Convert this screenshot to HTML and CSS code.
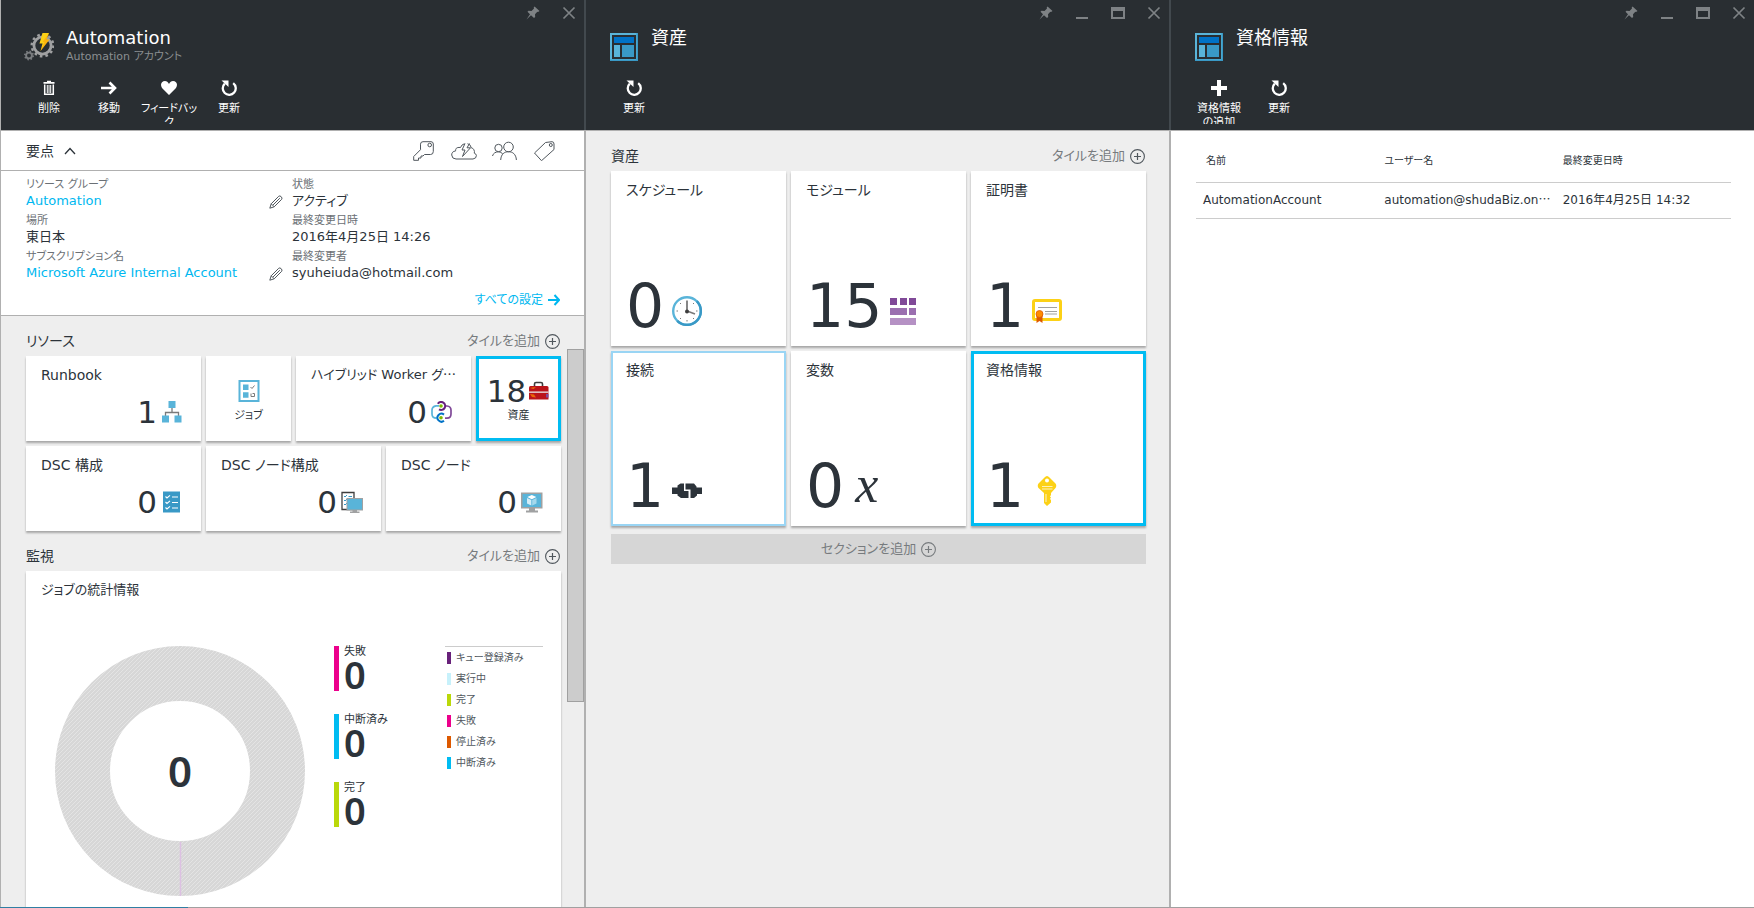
FILE: index.html
```html
<!DOCTYPE html>
<html lang="ja">
<head>
<meta charset="utf-8">
<meta name="viewport" content="width=device-width, initial-scale=1">
<title>Automation</title>
<link rel="stylesheet" href="styles.css">
</head>
<body>
<svg class="defs" aria-hidden="true">
  <symbol id="pin" viewBox="0 0 14 14"><path d="M8.600 0.500L13.500 5L12 6L11.300 5.700L9 8.200L9.200 11L8 12L5 9.200L0.500 13.500L4 8.200L1.500 5.800L2.500 4.800L5.500 5L8 2.600L7.700 1.500Z"/></symbol>
  <symbol id="min" viewBox="0 0 14 14"><path d="M1 11h12v2H1z"/></symbol>
  <symbol id="max" viewBox="0 0 14 14"><path fill-rule="evenodd" d="M0 1h14v12H0zM2 5v6h10V5z"/></symbol>
  <symbol id="close" viewBox="0 0 14 14"><path d="M1.500 1.500l11 11M12.500 1.500l-11 11" fill="none" stroke="currentColor" stroke-width="1.700"/></symbol>
  <symbol id="refresh" viewBox="0 0 16 16"><path d="M12.200 3.200A6.500 6.500 0 1 1 3.800 3.600" fill="none" stroke="currentColor" stroke-width="2.300"/><path d="M0.500 0.500H7.500V7Z"/></symbol>
  <symbol id="plus" viewBox="0 0 15 15"><circle cx="7.500" cy="7.500" r="6.900" fill="none" stroke="currentColor" stroke-width="1.100"/><path d="M7.500 4v7M4 7.500h7" stroke="currentColor" stroke-width="1.200"/></symbol>
  <symbol id="dash" viewBox="0 0 28 28"><path fill="#59b4d9" d="M0 0h28v28H0z"/><path fill="#3999c6" d="M0 26.500h28V28H0zM26.500 0H28v28h-1.500z"/><path fill="#292e32" d="M2 2h24v24H2z"/><path fill="#0072c6" d="M4 4h20v6H4z"/><path fill="#59b4d9" d="M4 12h6v12H4z"/><path fill="#3999c6" d="M12 12h12v12H12z"/></symbol>
  <symbol id="pencil" viewBox="0 0 14 14"><path d="M0.800 13.200L2.200 8.800L9.700 1.300Q10.800 0.300 12.200 1.700T12.700 4.300L5.200 11.800ZM2.200 8.800L5.200 11.800M4 10L10.800 3.200" fill="none" stroke="currentColor"/></symbol>
</svg>

<main class="blades">
  <section class="blade">
    <header class="blade-head">
      <div class="controls">
        <button aria-label="ピン留め"><svg><use href="#pin"/></svg></button>
        <button aria-label="閉じる"><svg><use href="#close"/></svg></button>
      </div>
      <div class="title">
        <svg class="title-icon" viewBox="0 0 30 30">
          <g fill="none" stroke="#a0a1a2"><circle cx="18.500" cy="13.500" r="8.600" stroke-width="2.800"/><circle cx="18.500" cy="13.500" r="10.800" stroke-width="2.400" stroke-dasharray="2.600 3.055"/></g>
          <g fill="none" stroke="#7a7d80"><circle cx="5" cy="23.500" r="2.900" stroke-width="1.900"/><circle cx="5" cy="23.500" r="4.200" stroke-width="1.600" stroke-dasharray="1.500 1.799"/></g>
          <path fill="#fcd116" d="M18.500 1H25L22.500 7.500H25.500L16.500 19L18.500 11.500H15.500Z"/><path fill="#ff8c00" opacity=".4" d="M25 1L22.500 7.500H25.500L16.500 19L20.500 10H18.500Z"/>
        </svg>
        <div><h1>Automation</h1><p>Automation アカウント</p></div>
      </div>
      <div class="commands">
        <button><svg viewBox="0 0 16 16"><path fill="none" stroke="currentColor" stroke-width="1.500" d="M3.700 4.500V14.300H12.300V4.500"/><path fill="none" stroke="currentColor" d="M6.300 5V13M8 5V13M9.700 5V13"/><path d="M2.500 2h11v1.700h-11zM6 .8h4V2H6z"/></svg><span>削除</span></button>
        <button><svg viewBox="0 0 16 16"><path fill="none" stroke="currentColor" stroke-width="2.600" d="M0 8H14M8.500 2.500L14 8L8.500 13.500"/></svg><span>移動</span></button>
        <button><svg viewBox="0 0 16 16"><path d="M8 15L1 8Q-1 4.500 1 2.300C3 .3 6.500.5 8 4C9.500.5 13 .3 15 2.300Q17 4.500 15 8Z"/></svg><span>フィードバッ<br>ク</span></button>
        <button><svg><use href="#refresh"/></svg><span>更新</span></button>
      </div>
    </header>
    <div class="blade-body">
      <div class="essentials-bar">
        <button class="toggle">要点 <svg viewBox="0 0 12 8"><path d="M1 7L6 1.500L11 7" fill="none" stroke="currentColor" stroke-width="1.300"/></svg></button>
        <div class="shortcuts">
          <button aria-label="キー"><svg viewBox="0 0 26 20"><path d="M12 0.700H20Q22.300 0.700 22.300 3V10.500Q22.300 13.500 19.500 13.500H13.500L12 15H10V17H7.500V19.300H2.700V15.500L9.500 8.700V3.200Q9.500 0.700 12 0.700Z"/><circle cx="18.700" cy="4" r="1.800"/></svg></button>
          <button aria-label="クラウド"><svg viewBox="0 0 26 20"><path d="M9.500 6.500C5 6 4.500 8 4.600 10C2 10 .6 12 .7 14Q1 18 5 18H22Q25.500 17.500 25.400 14.500Q25 12.500 23.300 12.200C24 10 22.500 7 20.300 6.800Q19.500 3 16.500 2.700M9.500 6.500Q10.500 3.500 13.500 2.700"/><path d="M14 2.500L11 9H14L11.500 15.500L19.500 6.800H16L18.500 2.500"/></svg></button>
          <button aria-label="ユーザー"><svg viewBox="0 0 26 20"><circle cx="17.500" cy="6" r="4.800"/><circle cx="7.500" cy="7" r="3.700"/><path d="M9.700 19C10 13 13.500 10.700 17.500 10.700S25 13 25.400 19M1.500 15C2 12.500 4.500 10.800 7.500 10.800Q10 10.800 11.800 13"/></svg></button>
          <button aria-label="タグ"><svg viewBox="0 0 26 20"><path d="M14.500 1.500L21 .7Q23 .7 23 3V8.500L10.500 19.700L3.500 12Z"/><circle cx="19.800" cy="4" r="1.500"/></svg></button>
        </div>
      </div>
      <div class="essentials">
        <dl>
          <div><dt>リソース グループ</dt><dd><a href="#">Automation</a><button aria-label="編集"><svg><use href="#pencil"/></svg></button></dd></div>
          <div><dt>場所</dt><dd>東日本</dd></div>
          <div><dt>サブスクリプション名</dt><dd><a href="#">Microsoft Azure Internal Account</a><button aria-label="編集"><svg><use href="#pencil"/></svg></button></dd></div>
        </dl>
        <dl>
          <div><dt>状態</dt><dd>アクティブ</dd></div>
          <div><dt>最終変更日時</dt><dd>2016年4月25日 14:26</dd></div>
          <div><dt>最終変更者</dt><dd>syuheiuda@hotmail.com</dd></div>
        </dl>
        <a class="all-settings" href="#">すべての設定 <svg viewBox="0 0 12 12"><path d="M0 6H11M6.500 1L11 6L6.500 11" fill="none" stroke="currentColor" stroke-width="2"/></svg></a>
      </div>
      <div class="lens-area">
        <div class="lens-head"><h2>リソース</h2><button class="add">タイルを追加 <svg><use href="#plus"/></svg></button></div>
        <div class="tiles">
          <a href="#" class="tile wide"><h3>Runbook</h3><div class="metric"><b>1</b><svg viewBox="0 0 22 22"><path d="M11 7V11M4.500 15V11.500H17.500V15" fill="none" stroke="#7a7a7a" stroke-width="1.300"/><path fill="#59b4d9" d="M7.500 0h7v7h-7zM1 14.500h7v7H1zM13.500 14.500h7v7h-7z"/></svg></div></a>
          <a href="#" class="tile small"><div class="metric"><svg viewBox="0 0 22 22"><path d="M1.500 1h19v20h-19z" fill="#fff" stroke="#59b4d9" stroke-width="2"/><path fill="#59b4d9" d="M5 4.500h5.500V10H5zM5 12.200h5.500v5.500H5z"/><path d="M12.500 7L14 8.500L16.500 5.500M13 13.500V16.500H16.500V13.500H14.500" fill="none" stroke="#7a7a7a"/></svg></div><span>ジョブ</span></a>
          <a href="#" class="tile wide"><h3 class="compact">ハイブリッド Worker グ<span class="dots">…</span></h3><div class="metric"><b>0</b><svg viewBox="0 0 22 22"><g fill="none" stroke-width="1.700"><path stroke="#59b4d9" d="M8 4.800H5Q1 5.500 1 9V13Q1 17 5.500 17.200"/><path stroke="#804998" d="M14 5H16Q20 5.500 20 9V13Q20 17 16 17.200H14"/><path stroke="#68217a" stroke-width="2" d="M6.800 2.800A4 4 0 1 1 8 8.300"/><path stroke="#0072c6" stroke-width="2" d="M13 13.600A4 4 0 1 0 13 19.800"/></g><circle cx="10" cy="5" r="1.800" fill="#7fba00"/><circle cx="10" cy="16.700" r="1.800" fill="#7fba00"/></svg></div></a>
          <a href="#" class="tile small selected"><div class="metric"><b>18</b><svg viewBox="0 0 22 22"><path d="M6.500 7V4Q6.500 2.500 8 2.500H13Q14.500 2.500 14.500 4V7" fill="none" stroke="#3e3e3e" stroke-width="1.600"/><path fill="#ba141a" d="M2.500 6h16.500Q20.500 6 20.500 7.500V19.500H1V7.500Q1 6 2.500 6Z"/><path fill="#e8e8e8" d="M1 11.500h19.500v1.300H1z"/><path fill="#ff8c00" opacity=".7" d="M2 8L5 7.300H8L5.500 9ZM2 14L6 14.500L8 17.500L4 17Z"/><path fill="#804998" d="M18 14h2.500v3.500H18z"/></svg></div><span>資産</span></a>
          <a href="#" class="tile wide"><h3>DSC 構成</h3><div class="metric"><b>0</b><svg viewBox="0 0 22 22"><path fill="#3999c6" d="M2 .5h17v21H2z"/><path d="M4.500 5.500L6 7L9 4.300M4.500 11L6 12.500L9 9.800M4.500 16.500L6 18L9 15.300M11 6h6M11 11.500h6M11 17h6" fill="none" stroke="#fff" stroke-width="1.100"/></svg></div></a>
          <a href="#" class="tile wide"><h3>DSC ノード構成</h3><div class="metric"><b>0</b><svg viewBox="0 0 22 22"><path d="M1 1.500h12v17H1z" fill="#fff" stroke="#3e3e3e" stroke-width="1.300"/><path d="M3 5L4 6L6 4M3 9L4 10L6 8M3 13L4 14L6 12M7.500 5.500H11" fill="none" stroke="#3999c6"/><path fill="#a0a1a2" d="M5.500 7h16.500v12.500H5.500zM9 20.500h9.500V22H9zM11.500 19h4.500v2h-4.500z"/><path fill="#59b4d9" d="M6.500 8h14.500v10.500H6.500z"/></svg></div></a>
          <a href="#" class="tile wide"><h3>DSC ノード</h3><div class="metric"><b>0</b><svg viewBox="0 0 22 22"><path fill="#a0a1a2" d="M0 1.500h21.500v16H0zM5 19.500h12v2H5zM8 17h6v3H8z"/><path fill="#59b4d9" d="M1.500 3h18.500v13H1.500z"/><path fill="#fff" d="M10.800 4L15.300 6L10.800 8.200L6.300 6Z"/><path fill="#d5edf7" d="M6 7L10.300 9V14.500L6 12.500Z"/><path fill="#a5d8ec" d="M15.500 7L11.200 9V14.500L15.500 12.500Z"/></svg></div></a>
        </div>
        <div class="lens-head"><h2>監視</h2><button class="add">タイルを追加 <svg><use href="#plus"/></svg></button></div>
        <div class="chart-tile">
          <h3 class="compact">ジョブの統計情報</h3>
          <div class="chart">
            <div class="donut">
              <svg viewBox="0 0 250 250"><defs><pattern id="hatch" width="4" height="4" patternUnits="userSpaceOnUse"><path d="M0 0h4v4H0z" fill="#d7d7d7"/><path d="M-1 1L1 -1M0 4L4 0M3 5L5 3" stroke="#e4e4e4"/></pattern></defs><circle cx="125" cy="125" r="97.500" fill="none" stroke="url(#hatch)" stroke-width="55"/><path d="M125.500 196V250" stroke="#dcc0e2" stroke-width="1.500"/></svg>
              <strong>0</strong>
            </div>
            <ul class="stats">
              <li class="failed"><span>失敗</span><strong>0</strong></li>
              <li class="suspended"><span>中断済み</span><strong>0</strong></li>
              <li class="done"><span>完了</span><strong>0</strong></li>
            </ul>
            <ul class="legend">
              <li class="queued">キュー登録済み</li>
              <li class="running">実行中</li>
              <li class="done">完了</li>
              <li class="failed">失敗</li>
              <li class="stopped">停止済み</li>
              <li class="suspended">中断済み</li>
            </ul>
          </div>
        </div>
        <div class="scroll-thumb"></div>
      </div>
    </div>
  </section>

  <section class="blade">
    <header class="blade-head">
      <div class="controls">
        <button aria-label="ピン留め"><svg><use href="#pin"/></svg></button>
        <button aria-label="最小化"><svg><use href="#min"/></svg></button>
        <button aria-label="最大化"><svg><use href="#max"/></svg></button>
        <button aria-label="閉じる"><svg><use href="#close"/></svg></button>
      </div>
      <div class="title"><svg class="title-icon dash"><use href="#dash"/></svg><div><h1>資産</h1></div></div>
      <div class="commands"><button><svg><use href="#refresh"/></svg><span>更新</span></button></div>
    </header>
    <div class="blade-body">
      <div class="lens-area">
        <div class="lens-head"><h2>資産</h2><button class="add">タイルを追加 <svg><use href="#plus"/></svg></button></div>
        <div class="tiles">
          <a href="#" class="tile big"><h3>スケジュール</h3><div class="metric"><b>0</b><svg viewBox="0 0 30 30"><circle cx="15" cy="15" r="13.800" fill="#fff" stroke="#59b4d9" stroke-width="2.400"/><path d="M24.800 5.200A13.800 13.800 0 0 1 5.200 24.800" fill="none" stroke="#3999c6" stroke-width="2.400"/><path d="M4.500 15h1.500M24 15h1.500M15 24v1.500M8 7l1 1M22 7l-1 1M8 23l1-1M22 23l-1-1" stroke="#7a7a7a"/><path d="M15 4.500V15L23 18" fill="none" stroke="#7a7a7a" stroke-width="1.800"/><circle cx="15" cy="15.500" r="2" fill="#3e3e3e"/></svg></div></a>
          <a href="#" class="tile big"><h3>モジュール</h3><div class="metric"><b>15</b><svg viewBox="0 0 30 30"><path fill="#804998" d="M0 2h7v7H0zM10 2h7v7h-7zM19 2h7v7h-7z"/><path fill="#9b6fb0" d="M0 12h17v7H0zM19 12h7v7h-7z"/><path fill="#b591c4" d="M0 22h26v7H0z"/></svg></div></a>
          <a href="#" class="tile big"><h3>証明書</h3><div class="metric"><b>1</b><svg viewBox="0 0 30 30"><rect x="1.500" y="4.500" width="27" height="19" rx="1.500" fill="#fff" stroke="#fcd116" stroke-width="3"/><path d="M6 11.500h19M13 15.500h12M13 18h12" stroke="#a0a1a2" stroke-width="1.200"/><path fill="#dd5900" d="M4.500 18h6v9l-3-2l-3 2z"/><circle cx="7.500" cy="18" r="3.500" fill="#ff8c00" stroke="#dd5900" stroke-width=".8"/></svg></div></a>
          <a href="#" class="tile big hinted"><h3>接続</h3><div class="metric"><b>1</b><svg viewBox="0 0 30 30"><path fill="#2c333a" d="M0 11.500h5.500v-2l3-2H12V15h4.500V22H9l-3.500-2.500v-1.500H0z"/><path fill="#2c333a" d="M30 11.500h-5.500v-1L22 7.500h-8.500V13.500h5V22H22l3-2.500V18h5z"/></svg></div></a>
          <a href="#" class="tile big"><h3>変数</h3><div class="metric"><b>0</b><i>x</i></div></a>
          <a href="#" class="tile big selected"><h3>資格情報</h3><div class="metric"><b>1</b><svg viewBox="0 0 30 30"><path fill="#fcd116" fill-rule="evenodd" d="M12.500 1.500Q15 -1.500 17.500 1.500L23.500 7.500Q25 9.500 23.500 12L19 17V19L18 20.500L19 21.500L18 23L19 24V26.500L15 30L12 27V17L6.500 12Q5 9.500 6.500 7.500ZM15 2.500A2 2 0 1 0 15 6.500A2 2 0 1 0 15 2.500Z"/><path d="M10 10.500h10.500M10 13h10.500M14 18v8" stroke="#fff" opacity=".7" stroke-width="1.100"/></svg></div></a>
        </div>
        <button class="add-section">セクションを追加 <svg><use href="#plus"/></svg></button>
      </div>
    </div>
  </section>

  <section class="blade">
    <header class="blade-head">
      <div class="controls">
        <button aria-label="ピン留め"><svg><use href="#pin"/></svg></button>
        <button aria-label="最小化"><svg><use href="#min"/></svg></button>
        <button aria-label="最大化"><svg><use href="#max"/></svg></button>
        <button aria-label="閉じる"><svg><use href="#close"/></svg></button>
      </div>
      <div class="title"><svg class="title-icon dash"><use href="#dash"/></svg><div><h1>資格情報</h1></div></div>
      <div class="commands">
        <button><svg viewBox="0 0 16 16"><path d="M6 0h4v6h6v4h-6v6H6v-6H0V6h6z"/></svg><span>資格情報<br>の追加</span></button>
        <button><svg><use href="#refresh"/></svg><span>更新</span></button>
      </div>
    </header>
    <div class="blade-body plain">
      <table>
        <thead><tr><th>名前</th><th>ユーザー名</th><th>最終変更日時</th></tr></thead>
        <tbody><tr><td>AutomationAccount</td><td>automation@shudaBiz.on<span class="dots">…</span></td><td>2016年4月25日 14:32</td></tr></tbody>
      </table>
    </div>
  </section>
</main>
<div class="progress"><div></div></div>
</body>
</html>
```
FILE: styles.css
```css
* { box-sizing: border-box; margin: 0; padding: 0; }

body {
  display: flex;
  flex-direction: column;
  height: 100vh;
  overflow: hidden;
  font: 13px/16px "DejaVu Sans", "Noto Sans CJK JP", sans-serif;
  font-feature-settings: "palt";
  color: #2c333a;
  background: #eee;
}

button { font: inherit; font-feature-settings: inherit; color: inherit; background: none; border: 0; cursor: pointer; }
a { color: inherit; text-decoration: none; }
ul { list-style: none; }
h1, h2, h3, th, b { font-weight: 400; }
svg { display: block; flex: none; fill: currentColor; }
.defs { position: absolute; width: 0; height: 0; }
.dots { font-family: "Noto Sans CJK JP", sans-serif; font-feature-settings: normal; line-height: 1; }

.blades { display: flex; flex: 1; min-height: 0; border-left: 1px solid #b0b0b0; }
.blade { display: flex; flex-direction: column; flex: 1 1 2px; min-width: 0; }
.blade:not(:last-child) .blade-head { border-right: 2px solid #42494e; }
.blade:not(:last-child) .blade-body { border-right: 2px solid #b0b0b0; }
.blade:last-child { flex-basis: 0; }

/* Blade header */
.blade-head { height: 130px; flex: none; color: #fff; background: #292e32; overflow: hidden; }
.controls { display: flex; align-items: flex-start; justify-content: flex-end; gap: 22px; height: 24px; padding: 6px 8px 0 0; color: #7e8285; }
.controls svg { width: 14px; height: 14px; }
.title { display: flex; gap: 12px; height: 50px; padding: 4px 0 0 23px; }
.title-icon { width: 30px; height: 30px; margin-top: 4px; }
.title-icon.dash { width: 28px; height: 28px; margin: 5px 1px 0; }
.title h1 { font-size: 18px; line-height: 20px; }
.title p { font-size: 11px; line-height: 18px; color: #8b8e91; }
.commands { display: flex; align-items: flex-start; height: 50px; padding: 6px 18px 0; overflow: hidden; }
.commands button { display: flex; flex-direction: column; align-items: center; gap: 6px; width: 60px; }
.commands svg { width: 16px; height: 16px; }
.commands span { font-size: 11px; line-height: 14px; white-space: nowrap; }

/* Blade content */
.blade-body { display: flex; flex-direction: column; flex: 1; min-height: 0; border-top: 1px solid #b0b0b0; background: #eee; }
.blade-body.plain { background: #fff; }

.essentials-bar { display: flex; flex: none; align-items: center; justify-content: space-between; height: 40px; padding: 0 27px 0 25px; background: #fff; border-bottom: 1px solid #b0b0b0; }
.toggle { display: flex; align-items: center; gap: 10px; font-size: 14px; }
.toggle svg { width: 12px; height: 8px; }
.shortcuts { display: flex; gap: 14px; color: #50575d; }
.shortcuts svg { width: 26px; height: 20px; fill: none; stroke: currentColor; }

.essentials { display: grid; flex: none; grid-template-columns: 257px 1fr; column-gap: 9px; padding: 6px 24px 7px 25px; background: #fff; border-bottom: 1px solid #b0b0b0; }
.essentials dl > div { height: 36px; }
.essentials dt { font-size: 11px; color: #6b7075; }
.essentials dd { display: flex; justify-content: space-between; white-space: nowrap; }
.essentials dd a, .all-settings { color: #00b8f0; }
.essentials dd button { color: #50575d; padding-top: 2px; }
.essentials dd svg { width: 14px; height: 14px; }
.all-settings { display: flex; grid-column: 2; justify-self: end; align-items: center; gap: 5px; margin-top: 7px; font-size: 12px; }
.all-settings svg { width: 12px; height: 12px; }

.lens-area { position: relative; flex: 1; min-height: 0; padding: 0 23px 0 25px; overflow: hidden; }
.lens-head { display: flex; align-items: center; justify-content: space-between; height: 40px; padding-top: 10px; }
.lens-head h2 { font-size: 14px; }
.add, .add-section { display: flex; align-items: center; gap: 5px; font-size: 13px; color: #777b7e; }
.add svg, .add-section svg { width: 15px; height: 15px; }
.add svg { color: #50575d; margin-right: 1px; }

.tiles { display: grid; grid-template-columns: repeat(6, 1fr); grid-auto-rows: 85px; gap: 5px; }
.tile, .chart-tile { background: #fff; box-shadow: 0 2px 2px rgba(0, 0, 0, .3); }
.tile { display: flex; flex-direction: column; justify-content: space-between; min-width: 0; }
.tile h3, .chart-tile h3 { height: 28px; padding: 10px 0 0 15px; font-size: 14px; line-height: 18px; white-space: nowrap; }
.tile h3.compact, .chart-tile h3.compact { font-size: 13px; }
.wide { grid-column: span 2; }
.big { grid-column: span 2; grid-row: span 2; }
.metric { display: flex; align-items: center; gap: 4px; }
.metric b { font-size: 31px; line-height: 32px; }
.metric svg { width: 22px; height: 22px; }
.wide .metric { justify-content: flex-end; padding: 0 18px 13px 0; }
.tile.small { justify-content: flex-start; align-items: center; padding-top: 19px; font-size: 11px; }
.small .metric { height: 32px; gap: 2px; }
.small span { line-height: 18px; }
.big .metric { align-items: flex-end; gap: 8px; padding: 0 0 10px 15px; }
.big .metric b { font-size: 60px; line-height: 60px; }
.big .metric svg { width: 30px; height: 30px; margin-bottom: 10px; }
.big .metric i { padding: 0 0 5px 3px; font: italic 52px/52px "Liberation Serif", serif; }
.selected { outline: 3px solid #00bcf2; outline-offset: -3px; }
.hinted { outline: 2px solid #9ad5f4; outline-offset: -2px; }
.add-section { justify-content: center; width: 100%; height: 30px; margin-top: 8px; background: #d6d6d6; }

/* Job statistics */
.chart-tile { height: 400px; }
.chart { display: grid; grid-template-columns: 250px 82px 98px; column-gap: 29px; padding: 47px 0 0 29px; }
.donut { display: grid; place-items: center; }
.donut > * { grid-area: 1 / 1; }
.donut svg { width: 250px; height: 250px; fill: none; }
.donut strong { font: 600 42px/42px "Noto Sans", sans-serif; }
.stats { display: grid; align-content: start; gap: 23px; }
.stats li { display: flex; flex-direction: column; height: 45px; padding-left: 5px; border-left: 5px solid var(--key); }
.stats span { font-size: 11px; line-height: 12px; }
.stats strong { font: 600 38px/33px "Noto Sans", sans-serif; }
.legend { align-self: start; border-top: 1px solid #ccc; font-size: 10px; color: #50575d; }
.legend li { display: flex; align-items: center; gap: 5px; height: 21px; padding-left: 2px; }
.legend li::before { content: ""; width: 4px; height: 12px; background: var(--key); }
.queued { --key: #68217a; }
.running { --key: #c7f1fb; }
.done { --key: #bad80a; }
.failed { --key: #ec008c; }
.stopped { --key: #dd5900; }
.suspended { --key: #00bcf2; }

.scroll-thumb { position: absolute; top: 33px; right: 0; width: 17px; height: 353px; background: #ccc; border: 1px solid #a0a0a0; }

/* Credential list */
.plain { padding: 10px 23px 0 25px; }
table { width: 100%; table-layout: fixed; border-collapse: collapse; }
th, td { height: 36px; padding-left: 10px; text-align: left; white-space: nowrap; border-bottom: 1px solid #ccc; }
th { height: 41px; font-size: 10px; }
td { font-size: 12px; }
td:first-child { padding-left: 7px; }

.progress { flex: none; height: 1px; background: #a0a0a0; }
.progress div { width: 188px; height: 1px; background: #2f7fa3; }
```
